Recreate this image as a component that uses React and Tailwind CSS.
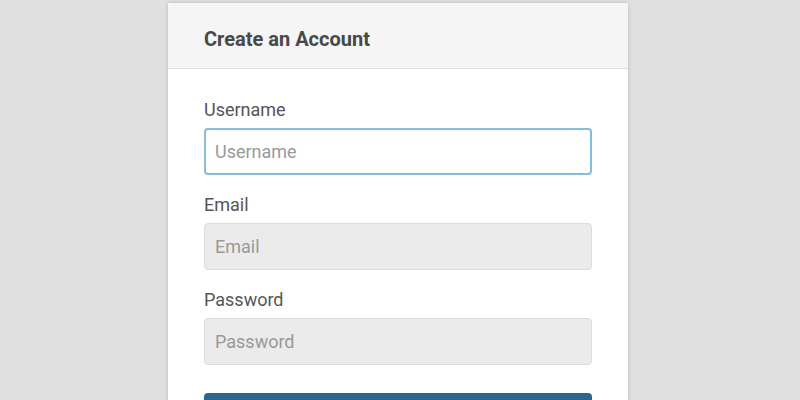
const fields = [
  { label: "Username", focus: true },
  { label: "Email" },
  { label: "Password" },
];

export default function App() {
  return (
    <div
      className="w-[800px] h-[400px] overflow-hidden bg-[#e0e0e0]"
      style={{ fontFamily: "Roboto, 'Liberation Sans', sans-serif" }}
    >
      <div className="ml-[168px] mt-[3px] w-[460px] bg-white shadow-[0_0_4px_rgba(0,0,0,0.18)] rounded-t-[2px]">
        <div className="h-[66px] flex items-center pt-[7px] px-[36px] bg-[#f5f5f5] border-b border-[#dedede]">
          <h1 className="text-[20px] font-bold text-[#484848]">Create an Account</h1>
        </div>
        <div className="px-[36px] pt-[29px]">
          {fields.map((f) => (
            <div key={f.label} className="mb-[18px]">
              <label className="block text-[18px] leading-[24px] text-[#555] mb-[6px]">
                {f.label}
              </label>
              <input
                placeholder={f.label}
                className={
                  f.focus
                    ? "w-full h-[47px] px-[9px] text-[18px] rounded-[4px] border-2 border-[#86bcdc] bg-white placeholder:text-[#999] outline-none"
                    : "w-full h-[47px] px-[10px] text-[18px] rounded-[4px] border border-[#dcdcdc] bg-[#ebebeb] placeholder:text-[#999] outline-none"
                }
              />
            </div>
          ))}
          <button className="mt-[10px] w-full h-[47px] rounded-[4px] bg-[#2b6594] text-white text-[18px]">
            Create Account
          </button>
        </div>
      </div>
    </div>
  );
}
